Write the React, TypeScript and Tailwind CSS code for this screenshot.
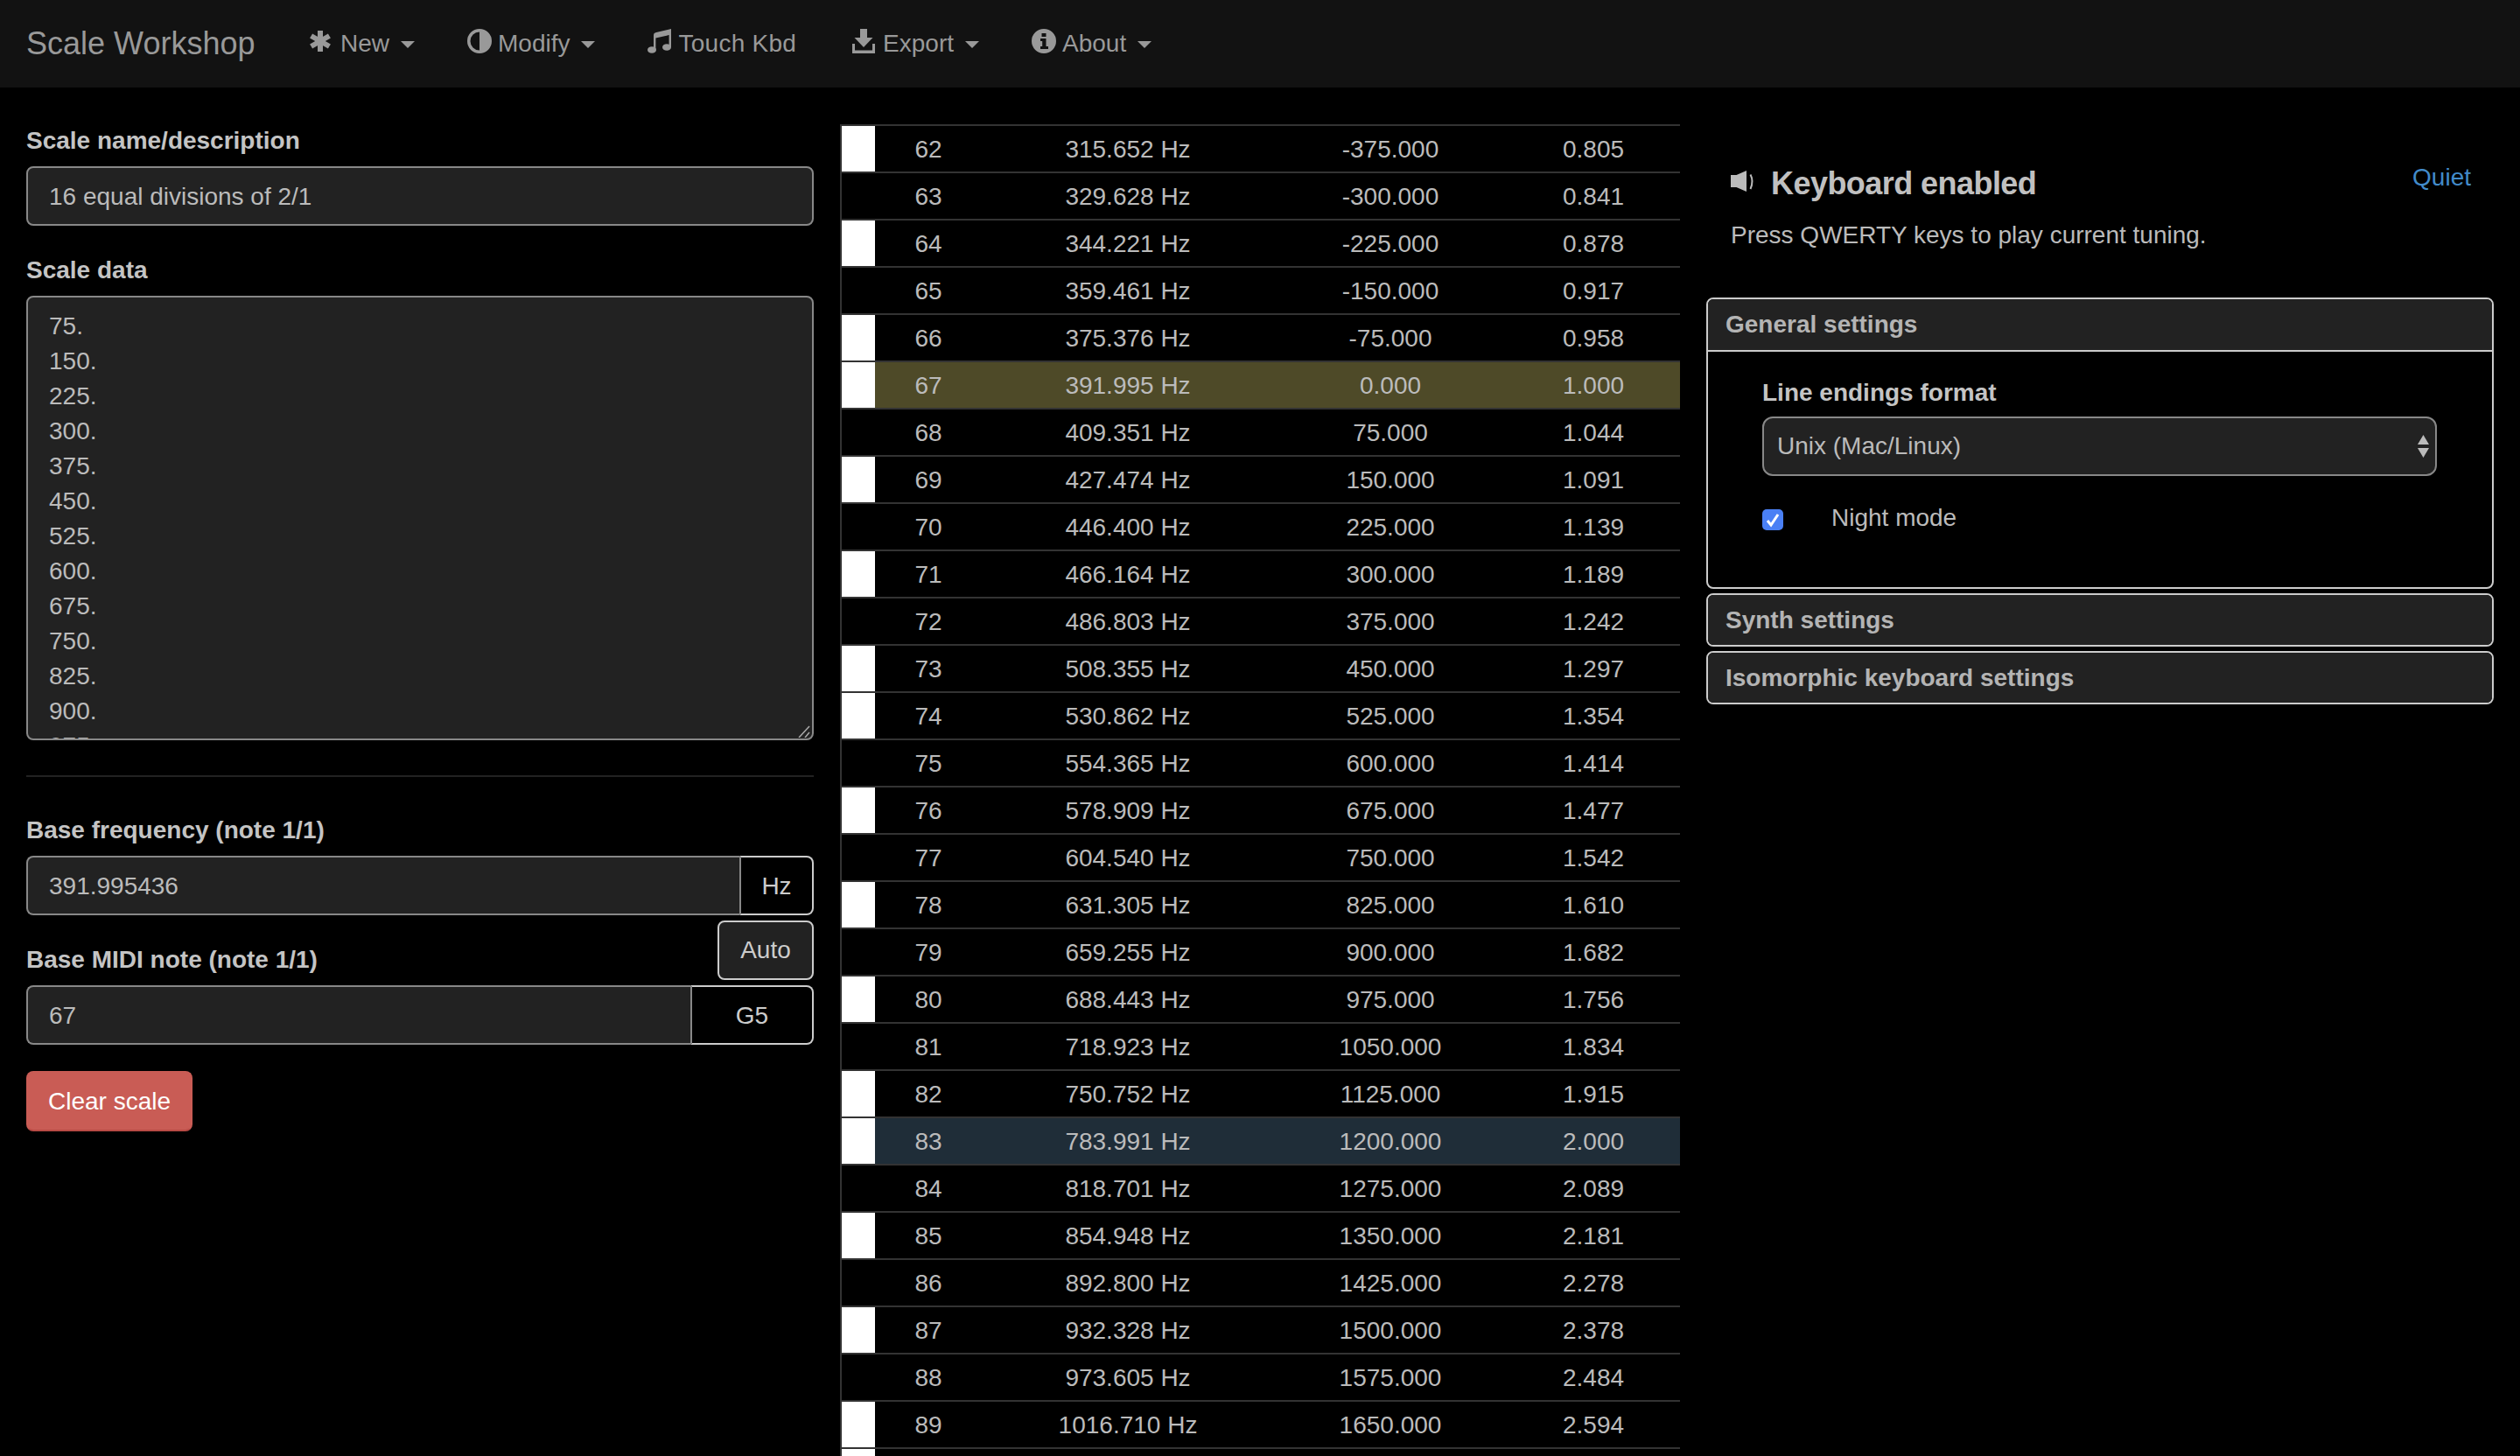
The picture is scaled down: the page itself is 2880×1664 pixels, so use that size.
import React from "react";

const rows: [number, string, string, string, boolean][] = [
  [62, "315.652 Hz", "-375.000", "0.805", true],
  [63, "329.628 Hz", "-300.000", "0.841", false],
  [64, "344.221 Hz", "-225.000", "0.878", true],
  [65, "359.461 Hz", "-150.000", "0.917", false],
  [66, "375.376 Hz", "-75.000", "0.958", true],
  [67, "391.995 Hz", "0.000", "1.000", true],
  [68, "409.351 Hz", "75.000", "1.044", false],
  [69, "427.474 Hz", "150.000", "1.091", true],
  [70, "446.400 Hz", "225.000", "1.139", false],
  [71, "466.164 Hz", "300.000", "1.189", true],
  [72, "486.803 Hz", "375.000", "1.242", false],
  [73, "508.355 Hz", "450.000", "1.297", true],
  [74, "530.862 Hz", "525.000", "1.354", true],
  [75, "554.365 Hz", "600.000", "1.414", false],
  [76, "578.909 Hz", "675.000", "1.477", true],
  [77, "604.540 Hz", "750.000", "1.542", false],
  [78, "631.305 Hz", "825.000", "1.610", true],
  [79, "659.255 Hz", "900.000", "1.682", false],
  [80, "688.443 Hz", "975.000", "1.756", true],
  [81, "718.923 Hz", "1050.000", "1.834", false],
  [82, "750.752 Hz", "1125.000", "1.915", true],
  [83, "783.991 Hz", "1200.000", "2.000", true],
  [84, "818.701 Hz", "1275.000", "2.089", false],
  [85, "854.948 Hz", "1350.000", "2.181", true],
  [86, "892.800 Hz", "1425.000", "2.278", false],
  [87, "932.328 Hz", "1500.000", "2.378", true],
  [88, "973.605 Hz", "1575.000", "2.484", false],
  [89, "1016.710 Hz", "1650.000", "2.594", true],
  // only the top of this row is on screen, its text falls below the fold
  [90, "", "", "", true],
];

const scaleData = Array.from({ length: 16 }, (_, i) => `${(i + 1) * 75}.`).join("\n");

function AsteriskIcon() {
  return (
    <svg viewBox="0 0 28 28" className="w-[28px] h-[28px] -mt-[6px]" fill="#999">
      <g stroke="#999" strokeWidth="6">
        <path d="M12 2v24" />
        <path d="M1.600 8l20.800 12" />
        <path d="M22.400 8L1.600 20" />
      </g>
      <circle cx="12" cy="14" r="6" />
    </svg>
  );
}

function AdjustIcon() {
  return (
    <svg viewBox="0 0 28 28" className="w-[28px] h-[28px] -mt-[6px]" fill="#999">
      <path fillRule="evenodd" d="M14 0a14 14 0 1 0 0 28a14 14 0 1 0 0-28z M14 3.500a10.500 10.500 0 0 0 0 21z" />
    </svg>
  );
}

function MusicIcon() {
  return (
    <svg viewBox="0 0 28 28" className="w-[28px] h-[28px] -mt-[6px]" fill="#999">
      <path d="M7 24V7.500C7 5 8 4.500 10 4L27 0v21h-2.400V7L9.400 10.400V24z" />
      <ellipse cx="5" cy="24" rx="5" ry="3.800" />
      <ellipse cx="22" cy="21" rx="5" ry="3.800" />
    </svg>
  );
}

function DownloadIcon() {
  return (
    <svg viewBox="0 0 28 28" className="w-[28px] h-[28px] -mt-[6px]" fill="#999">
      <path d="M9 0h8v10h6.500L13 21 2.500 10H9z" />
      <path d="M0 17h3v7.500h20V17h3v11H0z" />
    </svg>
  );
}

function InfoIcon() {
  return (
    <svg viewBox="0 0 28 28" className="w-[28px] h-[28px] -mt-[6px]" fill="#999">
      <path
        fillRule="evenodd"
        d="M14 0a14 14 0 1 0 0 28a14 14 0 1 0 0-28z M11.500 5h5v4h-5z M10 11h6.500v9H19v3H10v-3h2.200v-6H10z"
      />
    </svg>
  );
}

function SpeakerIcon() {
  return (
    <svg viewBox="0 0 28 24" className="w-[28px] h-[24px] shrink-0 -mt-[6px]" fill="#bbb">
      <path d="M0 5h6.500L18 0v24L6.500 19H0z" />
      <path d="M22.500 4.500Q26.500 12 22.500 21" fill="none" stroke="#bbb" strokeWidth="2" />
    </svg>
  );
}

function Caret() {
  return (
    <svg viewBox="0 0 16 8" className="w-[16px] h-[8px] ml-[13px] mt-[2px]" fill="#999">
      <path d="M0 0h16L8 8z" />
    </svg>
  );
}

function NavItem({ icon, label, caret = true }: { icon: React.ReactNode; label: string; caret?: boolean }) {
  return (
    <a href="#" className="flex items-center pl-[30px] pr-[30px] h-full text-[#999] whitespace-nowrap">
      {icon}
      <span className={caret ? "ml-[7px]" : "ml-[7px] mr-[4px] tracking-[0.25px]"}>{label}</span>
      {caret && <Caret />}
    </a>
  );
}

function FieldLabel({ children }: { children: React.ReactNode }) {
  return <label className="block h-[40px] pt-[1px] font-bold text-[#c4c4c4]">{children}</label>;
}

function InputGroup({ value, addon, addonWidth }: { value: string; addon: string; addonWidth: string }) {
  return (
    <div className="flex h-[68px] mt-[10px]">
      <input
        readOnly
        value={value}
        className="flex-1 min-w-0 bg-[#222] border-2 border-r-0 border-[#888] rounded-l-[8px] px-[24px] pt-[1px] text-[#bbb] outline-none"
      />
      <span
        className={`${addonWidth} flex items-center justify-center pt-[1px] border-2 border-[#ccc] border-l-[#888] rounded-r-[8px] bg-black text-[#ccc]`}
      >
        {addon}
      </span>
    </div>
  );
}

function SettingsPanel({ title, children }: { title: string; children?: React.ReactNode }) {
  return (
    <div className="border-2 border-[#ccc] rounded-[8px] overflow-hidden">
      <div className={`${children ? "h-[58px]" : "h-[57px]"} flex items-center px-[20px] bg-[#222] font-bold text-[#b4b4b4]`}>
        {title}
      </div>
      {children}
    </div>
  );
}

export default function App() {
  return (
    <div
      className="h-[1664px] w-[2880px] overflow-hidden bg-black text-[28px] leading-[40px] text-[#ccc]"
      style={{ fontFamily: '"Liberation Sans", Arial, sans-serif' }}
    >
      {/* NAVBAR */}
      <nav className="flex items-center h-[100px] bg-[#121212]">
        <a href="#" className="w-[324px] pl-[30px] text-[36px] text-[#999] whitespace-nowrap">
          Scale Workshop
        </a>
        <NavItem icon={<AsteriskIcon />} label="New" />
        <NavItem icon={<AdjustIcon />} label="Modify" />
        <NavItem icon={<MusicIcon />} label="Touch Kbd" caret={false} />
        <NavItem icon={<DownloadIcon />} label="Export" />
        <NavItem icon={<InfoIcon />} label="About" />
      </nav>

      <div className="grid grid-cols-3">
        {/* LEFT COLUMN */}
        <div className="px-[30px] pt-[40px]">
          <FieldLabel>Scale name/description</FieldLabel>
          <input
            readOnly
            value="16 equal divisions of 2/1"
            className="block w-full h-[68px] mt-[10px] bg-[#222] border-2 border-[#888] rounded-[8px] px-[24px] pt-[1px] text-[#bbb] outline-none"
          />

          <div className="mt-[30px]">
            <FieldLabel>Scale data</FieldLabel>
          </div>
          <div className="relative mt-[10px]">
            <textarea
              readOnly
              value={scaleData}
              className="block w-full h-[508px] bg-[#222] border-2 border-[#888] rounded-[8px] px-[24px] pt-[13px] pb-[11px] text-[#bbb] outline-none overflow-hidden resize-none"
            />
            {/* resize grip */}
            <svg viewBox="0 0 14 14" className="absolute right-[4px] bottom-[3px] w-[14px] h-[14px] pointer-events-none" fill="none" stroke="#aaa" strokeWidth="1.500">
              <path d="M1 14L13 1" />
              <path d="M8 14l5-6" />
            </svg>
          </div>

          <hr className="mt-[40px] mb-[40px] border-0 h-[2px] bg-[#222]" />

          <FieldLabel>Base frequency (note 1/1)</FieldLabel>
          <InputGroup value="391.995436" addon="Hz" addonWidth="w-[85px]" />

          <div className="flex justify-between items-end h-[40px] mt-[30px]">
            <FieldLabel>Base MIDI note (note 1/1)</FieldLabel>
            <button className="w-[110px] h-[68px] -mb-[4px] bg-[#222] border-2 border-[#ccc] rounded-[8px] text-[#ccc]">
              Auto
            </button>
          </div>
          <InputGroup value="67" addon="G5" addonWidth="w-[141px]" />

          <button className="block mt-[30px] w-[190px] h-[69px] bg-[#c95c55] border-2 border-[#c95c55] border-b-[#b84a45] rounded-[8px] text-white">
            Clear scale
          </button>
        </div>

        {/* TUNING TABLE */}
        <div className="pt-[42px] h-[1564px] overflow-hidden">
          {rows.map(([note, freq, cents, ratio, white]) => {
            const rowBg = note === 67 ? "bg-[#4e4a28]" : note === 83 ? "bg-[#1f2d38]" : "";
            return (
              <div
                key={note}
                className={`grid grid-cols-[40px_122px_334px_266px_198px] h-[54px] border-t-2 border-[#333] text-[#bbb] ${rowBg}`}
              >
                <div className="border-l-2 border-[#333] bg-black">
                  <div className={`h-full ${white ? "bg-white" : ""}`} />
                </div>
                <div className="flex items-center justify-center pt-[1px]">{freq && note}</div>
                <div className="flex items-center justify-center pt-[1px]">{freq}</div>
                <div className="flex items-center justify-center pt-[1px]">{cents}</div>
                <div className="flex items-center justify-center pt-[1px]">{ratio}</div>
              </div>
            );
          })}
        </div>

        {/* RIGHT COLUMN */}
        <div className="px-[30px] pt-[83px]">
          <div className="flex justify-between items-start pl-[28px] pr-[26px]">
            <div className="flex items-center mt-[7px] gap-[18px]">
              <SpeakerIcon />
              <h4 className="text-[36px] leading-[40px] font-bold tracking-[-0.55px] text-[#c0c0c0]">Keyboard enabled</h4>
            </div>
            <a href="#" className="text-[#428bca]">
              Quiet
            </a>
          </div>
          <p className="mt-[19px] pl-[28px] text-[#bbb]">Press QWERTY keys to play current tuning.</p>

          <div className="mt-[51px] flex flex-col gap-[5px]">
            <SettingsPanel title="General settings">
              <div className="border-t-2 border-[#ccc] h-[271px] pl-[62px] pt-[26px]">
                <FieldLabel>Line endings format</FieldLabel>
                <div className="relative w-[771px] h-[68px] mt-[8px]">
                  <select className="block w-full h-full appearance-none bg-[#222] border-2 border-[#888] rounded-[12px] pl-[15px] text-[#bbb] outline-none">
                    <option>Unix (Mac/Linux)</option>
                  </select>
                  <svg viewBox="0 0 13 26" className="absolute right-[9px] top-[21px] w-[13px] h-[26px] pointer-events-none" fill="#bbb">
                    <path d="M6.500 0L13 11H0zM0 15h13L6.500 26z" />
                  </svg>
                </div>
                <div className="flex items-center mt-[28px] h-[40px]">
                  <span className="flex items-center justify-center w-[24px] h-[24px] mt-[4px] rounded-[5px] bg-[#4a80f5]">
                    <svg viewBox="0 0 24 24" className="w-[24px] h-[24px]" fill="none" stroke="#fff" strokeWidth="3">
                      <path d="M6 13l4 5 8-12" />
                    </svg>
                  </span>
                  <span className="ml-[55px] text-[#bbb]">Night mode</span>
                </div>
              </div>
            </SettingsPanel>
            <SettingsPanel title="Synth settings" />
            <SettingsPanel title="Isomorphic keyboard settings" />
          </div>
        </div>
      </div>
    </div>
  );
}
